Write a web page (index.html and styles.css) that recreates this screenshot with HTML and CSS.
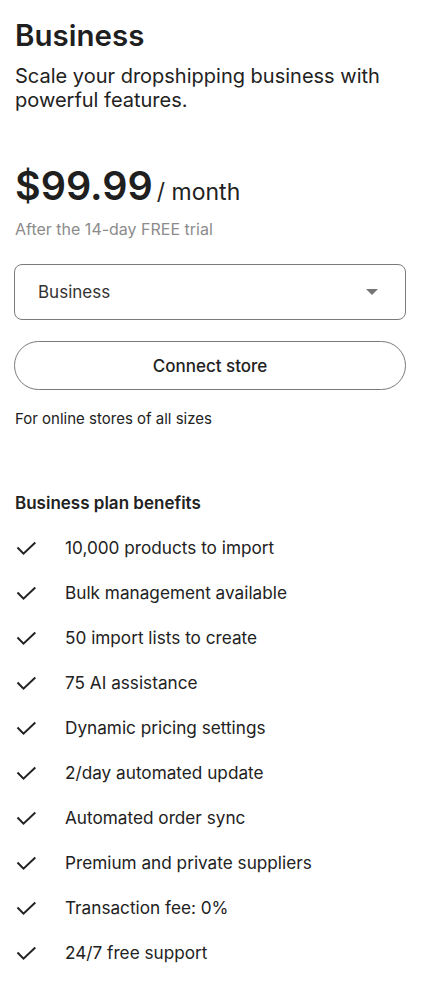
FILE: index.html
```html
<!DOCTYPE html>
<html lang="en">
<head>
<meta charset="utf-8">
<link rel="stylesheet" href="styles.css">
</head>
<body>
<div class="card">
  <h1 class="title">Business</h1>
  <p class="subtitle">Scale your dropshipping business with powerful features.</p>
  <div class="price-row">
    <span class="price">$99.99</span><span class="period">/ month</span>
  </div>
  <p class="trial">After the 14-day FREE trial</p>
  <div class="select">
    <span class="select-label">Business</span>
    <svg class="caret" width="12" height="6" viewBox="0 0 12 6"><path d="M0 0h12L6 6z" fill="#757575"/></svg>
  </div>
  <button class="connect">Connect store</button>
  <p class="note">For online stores of all sizes</p>
  <h2 class="benefits-title">Business plan benefits</h2>
  <ul class="benefits">
    <li><svg class="check" width="22" height="20" viewBox="0 0 22 20"><path d="M1.5 9.5l6 6.2 11.8-11.2" fill="none" stroke="#222" stroke-width="2"/></svg><span>10,000 products to import</span></li>
    <li><svg class="check" width="22" height="20" viewBox="0 0 22 20"><path d="M1.5 9.5l6 6.2 11.8-11.2" fill="none" stroke="#222" stroke-width="2"/></svg><span>Bulk management available</span></li>
    <li><svg class="check" width="22" height="20" viewBox="0 0 22 20"><path d="M1.5 9.5l6 6.2 11.8-11.2" fill="none" stroke="#222" stroke-width="2"/></svg><span>50 import lists to create</span></li>
    <li><svg class="check" width="22" height="20" viewBox="0 0 22 20"><path d="M1.5 9.5l6 6.2 11.8-11.2" fill="none" stroke="#222" stroke-width="2"/></svg><span>75 AI assistance</span></li>
    <li><svg class="check" width="22" height="20" viewBox="0 0 22 20"><path d="M1.5 9.5l6 6.2 11.8-11.2" fill="none" stroke="#222" stroke-width="2"/></svg><span>Dynamic pricing settings</span></li>
    <li><svg class="check" width="22" height="20" viewBox="0 0 22 20"><path d="M1.5 9.5l6 6.2 11.8-11.2" fill="none" stroke="#222" stroke-width="2"/></svg><span>2/day automated update</span></li>
    <li><svg class="check" width="22" height="20" viewBox="0 0 22 20"><path d="M1.5 9.5l6 6.2 11.8-11.2" fill="none" stroke="#222" stroke-width="2"/></svg><span>Automated order sync</span></li>
    <li><svg class="check" width="22" height="20" viewBox="0 0 22 20"><path d="M1.5 9.5l6 6.2 11.8-11.2" fill="none" stroke="#222" stroke-width="2"/></svg><span>Premium and private suppliers</span></li>
    <li><svg class="check" width="22" height="20" viewBox="0 0 22 20"><path d="M1.5 9.5l6 6.2 11.8-11.2" fill="none" stroke="#222" stroke-width="2"/></svg><span>Transaction fee: 0%</span></li>
    <li><svg class="check" width="22" height="20" viewBox="0 0 22 20"><path d="M1.5 9.5l6 6.2 11.8-11.2" fill="none" stroke="#222" stroke-width="2"/></svg><span>24/7 free support</span></li>
  </ul>
</div>
</body>
</html>
```
FILE: styles.css
```css
* { box-sizing: border-box; }
html, body { margin: 0; padding: 0; background: #fff; }
body { font-family: Inter, "Noto Sans", sans-serif; color: #222; }
.card { padding: 16px 17px 0 14px; }
.title { margin: 0; font-size: 29.5px; line-height: 38px; font-weight: 600; color: #1f1f1f; padding-left: 1px; }
.subtitle { margin: 10px 0 0; font-size: 20px; line-height: 24px; font-weight: 400; color: #222; padding-left: 1px; }
.price-row { margin-top: 48px; display: flex; align-items: baseline; gap: 4px; padding-left: 1px; }
.price { font-size: 39.5px; line-height: 52px; font-weight: 600; color: #1f1f1f; }
.period { font-size: 23px; color: #222; }
.trial { margin: 8px 0 0; font-size: 16px; line-height: 18px; color: #8c8c8c; padding-left: 1px; }
.select { margin-top: 26px; height: 56px; border: 1px solid #7a7a7a; border-radius: 8px; display: flex; align-items: center; justify-content: space-between; padding: 0 27px 0 23px; }
.select-label { font-size: 17px; color: #333; }
.connect { margin-top: 21px; width: 100%; height: 49px; border: 1px solid #7a7a7a; border-radius: 25px; background: #fff; font-family: inherit; font-size: 17px; font-weight: 500; color: #222; display: block; }
.note { margin: 20px 0 0; font-size: 15px; line-height: 18px; color: #222; padding-left: 1px; }
.benefits-title { margin: 65px 0 0; font-size: 17px; line-height: 20px; font-weight: 600; color: #222; padding-left: 1px; }
.benefits { list-style: none; margin: 12px 0 0; padding: 0; }
.benefits li { display: flex; align-items: center; height: 45px; font-size: 17.2px; color: #222; }
.check { margin-left: 2px; flex: none; }
.benefits span { margin-left: 27px; }
```
